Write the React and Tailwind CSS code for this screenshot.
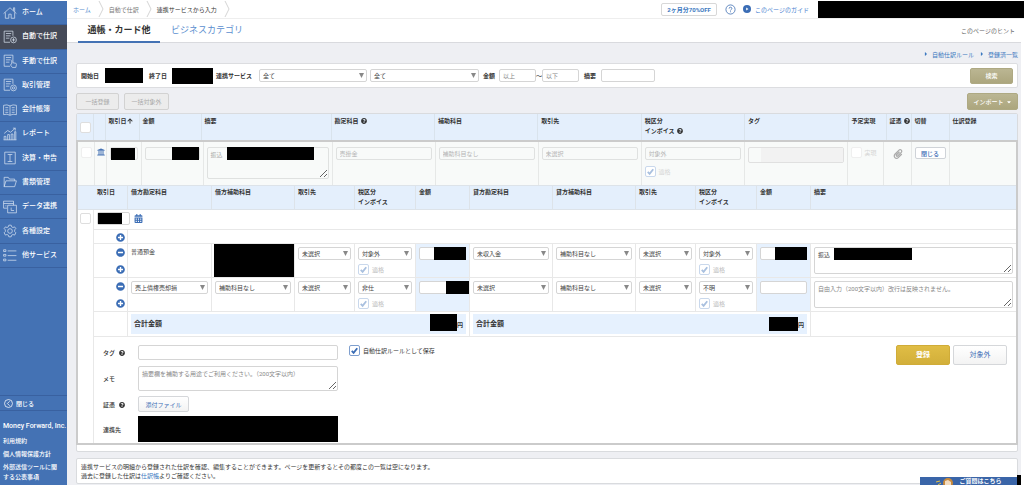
import React from 'react';
import clsx from 'clsx';
import {
    FaArrowUp,
    FaCalendarAlt,
    FaCaretDown,
    FaCaretRight,
    FaMinusCircle,
    FaPaperclip,
    FaPlusCircle,
    FaQuestionCircle,
    FaUniversity,
} from 'react-icons/fa';

const DOC = 'M17 10V2H2v19h10M5 6h9M5 10h8M5 14h6';

const NAV = [
    { label: 'ホーム', d: 'M1 13 12 3l11 10M18 8V3h2v7M4 11v10h6v-7h4v7h6V11' },
    { label: '自動で仕訳', d: `${DOC}M23 17a5 5 0 1 1-10 0 5 5 0 0 1 10 0M18 14v6M15 17h6`, active: true },
    { label: '手動で仕訳', d: `${DOC}M15 17v-6q1-2 2 0v4l5 1q1 0 1 2l-1 5h-6l-3-4 1-2z` },
    { label: '取引管理', d: `${DOC}M23 17a5 5 0 1 1-10 0 5 5 0 0 1 10 0M20 17a2 2 0 1 1-4 0 2 2 0 0 1 4 0` },
    { label: '会計帳簿', d: 'M12 5Q7 2 1 4v16q6-2 11 1 5-3 11-1V4q-6-2-11 1M12 5v16M4 8h5M4 12h5M4 16h5M15 8h5M15 12h5M15 16h5' },
    { label: 'レポート', d: 'M2 22v-6h3v6M8 22v-9h3v9M14 22V12h3v10M20 22V8h2v14M1 22h22M2 11l6-5 5 3 8-7M17 2h4v4' },
    { label: '決算・申告', d: 'M3 2h18v20H3zM8 6h8M12 6v12M8 18h8' },
    { label: '書類管理', d: 'M2 20V4h7l2 3h9v3M2 20l3-10h18l-3 10z' },
    { label: 'データ連携', d: 'M18 9V2H1v12h6M1 6h17M8 9h15v13H8zM14 13v5h5M4 10h2' },
    {
        label: '各種設定',
        d: 'M10 2h4l1 3 2 1 3-1 2 3-2 2v3l2 2-2 4-3-1-2 1-1 3h-4l-1-3-2-1-3 1-2-4 2-2v-3l-2-2 2-3 3 1 2-1zM16 12a4 4 0 1 1-8 0 4 4 0 0 1 8 0',
    },
    { label: '他サービス', d: 'M1 3h4v3H1zM1 11h4v3H1zM1 19h4v3H1zM8 5h15M8 13h15M8 21h15' },
];

const field = 'block w-full border border-[#d5d5d5] rounded-[2px] bg-white px-[3px] text-[#444] placeholder:text-[#888] outline-none';

const Help = () => <FaQuestionCircle className="inline-block align-[-1px] ml-[2px]" size={6} />;

const Masked = ({ className }) => <span className={clsx('block bg-black shrink-0', className)} />;

const Select = ({ label, value, className }) => (
    <div className={clsx('relative', className)}>
        <select aria-label={label} defaultValue={value} className={clsx(field, 'h-[13px] appearance-none leading-[11px]')}>
            <option>{value}</option>
        </select>
        <svg viewBox="0 0 5 5" className="absolute right-[3px] top-1 size-[5px] text-[#888] pointer-events-none">
            <path d="M0 0h5L2.500 5z" fill="currentColor" />
        </svg>
    </div>
);

const Tick = ({ label, text, checked, tone = 'text-[#3b6db5] border-[#7f9fce]', textTone = 'text-[#333]', className }) => (
    <label className={clsx('flex items-center gap-[3px]', className)}>
        <span className="relative block size-[11px] shrink-0">
            <input
                type="checkbox"
                aria-label={label}
                defaultChecked={checked}
                className={clsx('block size-[11px] appearance-none rounded-[2px] border bg-white', tone)}
            />
            {checked && (
                <svg viewBox="0 0 12 12" className={clsx('absolute inset-0 size-[11px] pointer-events-none', tone)}>
                    <path d="M3 6.500 5 8.500 9 3.500" fill="none" stroke="currentColor" strokeWidth="2" />
                </svg>
            )}
        </span>
        {text && <span className={textTone}>{text}</span>}
    </label>
);

const plain = 'border-[#dedede]';
const faded = 'text-[#a9c0df] border-[#c9d8ec]';

const Sidebar = () => (
    <aside className="flex w-[67px] shrink-0 flex-col bg-[#4472b4] text-white font-medium mt-px">
        <nav className="flex h-[267px] flex-col text-[7px]">
            {NAV.map(item => (
                <a
                    key={item.label}
                    href="#"
                    className={clsx(
                        'flex flex-1 items-center gap-[5px] border-b border-[#3961a0] pl-[3px] whitespace-nowrap',
                        item.active && 'bg-[#454a58]'
                    )}
                >
                    <svg viewBox="0 0 24 24" className="size-[14px] shrink-0" fill="none" stroke="#dce6f4" strokeWidth="1.2">
                        <path d={item.d} />
                    </svg>
                    {item.label}
                </a>
            ))}
        </nav>
        <div className="mt-auto">
            <button className="flex h-4 w-full items-center gap-[3px] border-y border-[#3961a0] pl-1 text-[6px]">
                <svg viewBox="0 0 12 12" className="size-[9px]" fill="none" stroke="white">
                    <circle cx="6" cy="6" r="5.3" />
                    <path d="M7.500 3 4.500 6l3 3" />
                </svg>
                閉じる
            </button>
            <div className="flex flex-col gap-[3px] pl-[3px] pt-[10px] pb-[3px] leading-[10px]">
                <a href="#" className="mb-[2px] text-[7px] whitespace-nowrap">Money Forward, Inc.</a>
                <a href="#">利用規約</a>
                <a href="#">個人情報保護方針</a>
                <a href="#">外部送信ツールに関<br />する公表事項</a>
            </div>
        </div>
    </aside>
);

const Separator = () => (
    <svg viewBox="0 0 6 18" className="ml-[7px] mr-[5px] h-[18px] w-[6px]" fill="none" stroke="#d5d5d5">
        <path d="M1 1l4 8-4 8" />
    </svg>
);

const Header = () => (
    <header>
        <div className="flex h-[19px] items-center justify-between border-b border-[#eee] pl-[6px]">
            <div className="flex items-center">
                <a href="#" className="text-[#5b8fcf]">ホーム</a>
                <Separator />
                <span className="text-[#777]">自動で仕訳</span>
                <Separator />
                <span>連携サービスから入力</span>
                <Separator />
            </div>
            <div className="flex items-center">
                <button className="h-[13px] w-14 rounded-[2px] border border-[#d8d8d8] font-bold text-[#3b78c0]">2ヶ月分70%OFF</button>
                <svg viewBox="0 0 12 12" className="ml-2 size-[11px]" fill="none" stroke="#4472b4" strokeWidth="0.9">
                    <circle cx="6" cy="6" r="5" />
                    <path d="M4.500 5q0-1.500 1.500-1.500T7.500 5q0 .7-.8 1.100T6 7M6 8v1" />
                </svg>
                <a href="#" className="ml-[7px] mr-[9px] flex items-center gap-1 text-[#4a7fd0]">
                    <svg viewBox="0 0 8 8" className="size-2">
                        <circle cx="4" cy="4" r="4" fill="#3b6db5" />
                        <path d="M3.200 2.500v3L5.500 4z" fill="white" />
                    </svg>
                    このページのガイド
                </a>
                <Masked className="h-[17px] w-[206px]" />
            </div>
        </div>
        <div className="mr-[3px] flex h-6 items-stretch border-b border-[#d9dade] pl-[11px] pr-[6px] text-[9px]">
            <a href="#" className="-mb-px flex w-[82px] items-center justify-center border-b-2 border-[#4472b4] font-bold">通帳・カード他</a>
            <a href="#" className="ml-[11px] flex items-center text-[#5b8fcf]">ビジネスカテゴリ</a>
            <a href="#" className="ml-auto flex items-center text-[6px] text-[#666]">このページのヒント</a>
        </div>
    </header>
);

const beige = 'bg-linear-to-b from-[#bbb693] to-[#aca67e] text-white border border-[#aea983] rounded-[2px] font-medium';

const SearchBar = () => (
    <form className="flex h-[25px] items-center rounded-[2px] border border-[#dcdde0] bg-white px-1">
        <span className="w-6 font-bold">開始日</span>
        <Masked className="h-[15px] w-[38px]" />
        <span className="ml-[6px] w-[23px] font-bold">終了日</span>
        <Masked className="h-4 w-[41px]" />
        <span className="ml-[3px] w-[43px] font-bold">連携サービス</span>
        <Select label="連携サービス" value="全て" className="w-[108px]" />
        <Select label="口座" value="全て" className="ml-[3px] w-[109px]" />
        <label htmlFor="min" className="ml-1 w-4 font-bold">金額</label>
        <input id="min" placeholder="以上" className={clsx(field, 'h-[13px] max-w-[37px]')} />
        <span>～</span>
        <input aria-label="金額上限" placeholder="以下" className={clsx(field, 'h-[13px] max-w-[37px]')} />
        <label htmlFor="note" className="ml-[5px] w-[17px] shrink-0 font-bold">摘要</label>
        <input id="note" className={clsx(field, 'h-[13px] max-w-[54px]')} />
        <button type="button" className={clsx(beige, 'ml-auto h-4 w-[43px] shrink-0')}>検索</button>
    </form>
);

const COLUMNS = [
    { w: 'w-4' },
    { w: 'w-3' },
    { w: 'w-[34px]', text: '取引日', arrow: true },
    { w: 'w-[62px]', text: '金額' },
    { w: 'w-[130px]', text: '摘要' },
    { text: '勘定科目', help: true },
    { text: '補助科目' },
    { text: '取引先' },
    { text: '税区分', second: 'インボイス', help: true },
    { text: 'タグ' },
    { w: 'w-[38px]', text: '予定実現' },
    { w: 'w-[25px]', text: '証憑', help: true },
    { w: 'w-[38px]', text: '切替' },
    { w: 'w-[68px]', text: '仕訳登録' },
];

const ListHead = () => (
    <table className="w-full table-fixed bg-[#e4effc]">
        <thead>
            <tr className="h-[26px] text-left align-top leading-[10px]">
                {COLUMNS.map((col, i) => (
                    <th key={i} className={clsx(col.w, 'border-r border-[#d9e3ec] last:border-r-0 pt-[2px] pl-[3px] font-bold whitespace-nowrap')}>
                        {i === 0 && <Tick label="すべて選択" tone={plain} className="pt-[6px]" />}
                        {col.text}
                        {col.arrow && <FaArrowUp className="inline-block align-[-1px]" size={6} />}
                        {col.second && <br />}
                        {col.second}
                        {col.help && <Help />}
                    </th>
                ))}
            </tr>
        </thead>
    </table>
);

const off = 'block w-full rounded-[2px] border border-[#dfe1e0] bg-[#f8faf9] px-[3px] text-[#aaa] placeholder:text-[#b5b5b5]';
const cell = 'border-r border-[#e6e8e7] last:border-r-0 px-[3px] pt-[5px]';

const StatementRow = () => (
    <table className="w-full table-fixed bg-[#f8faf9]">
        <tbody>
            <tr className="h-[43px] align-top">
                <td className={clsx(cell, 'w-4')}><Tick label="選択" tone="border-[#efefef]" /></td>
                <td className="w-3 border-r border-[#e6e8e7] pl-[2px] pt-[6px]"><FaUniversity className="text-[#4472b4]" size={8} /></td>
                <td className={clsx(cell, 'w-[35px]')}>
                    <div className="flex h-[13px] items-center rounded-[2px] border border-[#e2e2e2]"><Masked className="h-3 w-6" /></div>
                </td>
                <td className={clsx(cell, 'w-[62px]')}>
                    <div className="flex h-[13px] items-center justify-end rounded-[2px] border border-[#dfe1e0]"><Masked className="h-[13px] w-[27px]" /></div>
                </td>
                <td className={clsx(cell, 'relative w-[129px]')}>
                    <textarea disabled aria-label="摘要" defaultValue="振込" className={clsx(off, 'h-8 resize py-[2px]')} />
                    <Masked className="absolute left-[23px] top-[5px] h-[13px] w-[87px]" />
                </td>
                {['売掛金', '補助科目なし', '未選択', '対象外'].map(v => (
                    <td key={v} className={cell}>
                        <input disabled aria-label={v} placeholder={v} className={clsx(off, 'h-[13px]')} />
                        {v === '対象外' && <Tick checked text="適格" tone={faded} textTone="text-[#d5d5d5]" className="mt-[6px]" />}
                    </td>
                ))}
                <td className={cell}>
                    <div className="h-4 rounded-[2px] border border-[#e0e0e0] pl-3"><div className="h-full bg-[#f2f2f2]" /></div>
                </td>
                <td className={clsx(cell, 'w-9')}><Tick text="実現" tone="border-[#efefef]" textTone="text-[#d5d5d5]" /></td>
                <td className={clsx(cell, 'w-7 pl-[9px]')}><FaPaperclip className="mt-[2px] text-[#aaa]" size={10} /></td>
                <td className={clsx(cell, 'w-[38px]')}>
                    <button className="block h-3 w-full rounded-[2px] border border-[#cfd3d8] bg-white font-medium text-[#3b6db5]">閉じる</button>
                </td>
                <td className={clsx(cell, 'w-[67px]')} />
            </tr>
        </tbody>
    </table>
);

const SUB_COLUMNS = [
    ['w-[84px]', '借方勘定科目'],
    ['w-[83px]', '借方補助科目'],
    ['w-[60px]', '取引先'],
    ['w-[61px]', '税区分', 'インボイス'],
    ['w-[54px]', '金額'],
    ['w-[83px]', '貸方勘定科目'],
    ['w-[83px]', '貸方補助科目'],
    ['w-[60px]', '取引先'],
    ['w-[61px]', '税区分', 'インボイス'],
    ['w-[54px]', '金額'],
    ['', '摘要'],
];

const line = 'border-r border-b border-[#e8e8e8] last:border-r-0 px-[3px] pt-[3px]';

const TaxCell = ({ value }) => (
    <td className={line}>
        <Select label="税区分" value={value} />
        <Tick checked text="適格" tone={faded} textTone="text-[#bbb]" className="mt-[4px]" />
    </td>
);

const AmountCell = ({ mask }) => (
    <td className={clsx(line, 'relative bg-[#e6f1fe]')}>
        <input aria-label="金額" className={clsx(field, 'h-[13px]')} />
        {mask && <Masked className={clsx('absolute top-[3px] h-[13px]', mask)} />}
    </td>
);

const LineButtons = () => (
    <td className={clsx(line, 'pr-[2px]')}>
        <div className="flex flex-col items-end gap-2 pt-px text-[#3b6db5]">
            <button aria-label="行を削除"><FaMinusCircle size={9} /></button>
            <button aria-label="行を追加"><FaPlusCircle size={9} /></button>
        </div>
    </td>
);

const secondary = 'rounded-[2px] border border-[#d5d7da] bg-linear-to-b from-white to-[#f3f3f3] text-[#3b6db5]';

const EntryForm = () => (
    <div className="flex items-start pt-2 pl-[9px] pr-[9px]">
        <div className="grid grid-cols-[35px_200px] items-center">
            <label htmlFor="tag" className="font-medium">タグ <Help /></label>
            <input id="tag" className={clsx(field, 'h-[15px]')} />
            <label htmlFor="memo" className="mt-[6px] font-medium">メモ</label>
            <textarea id="memo" placeholder="摘要欄を補助する用途でご利用ください。（200文字以内）" className={clsx(field, 'mt-[6px] h-[25px] resize py-[2px]')} />
            <span className="mt-[5px] font-medium">証憑 <Help /></span>
            <button className={clsx(secondary, 'mt-[5px] h-4 w-[51px]')}>添付ファイル</button>
            <span className="mt-1 font-medium">連携先</span>
            <Masked className="mt-1 h-[26px] w-full" />
        </div>
        <Tick checked text="自動仕訳ルールとして保存" className="ml-[11px]" />
        <div className="ml-auto flex gap-[3px] text-[7px]">
            <button className="h-5 w-[54px] rounded-[2px] border border-[#d0ac38] bg-linear-to-b from-[#e0bd45] to-[#d2af3a] font-bold text-white">登録</button>
            <button className={clsx(secondary, 'h-5 w-[54px]')}>対象外</button>
        </div>
    </div>
);

const JournalTable = () => (
    <table className="w-full table-fixed border-separate border-spacing-0 bg-white">
        <thead>
            <tr className="h-[25px] bg-[#e4effc] text-left align-top leading-[10px]">
                <th className="w-4 border-y border-[#dde3e9]" />
                <th className="w-[34px] border-y border-r border-[#dde3e9] pt-px pl-[3px] font-bold">取引日</th>
                {SUB_COLUMNS.map(([w, text, second], i) => (
                    <th key={i} className={clsx(w, 'border-y border-r border-[#dde3e9] last:border-r-0 pt-px pl-[3px] font-bold')}>
                        {text}
                        {second && <br />}
                        {second}
                    </th>
                ))}
            </tr>
        </thead>
        <tbody className="align-top">
            <tr className="h-5">
                <td rowSpan={6} className="border-r border-[#e8e8e8] pt-[3px] pl-[2px]"><Tick label="選択" tone={plain} /></td>
                <td colSpan={12} className="border-b border-[#e8e8e8] px-[3px] pt-[2px]">
                    <div className="flex items-center gap-1">
                        <div className="h-[13px] w-[33px] rounded-[2px] border border-[#d5d5d5]"><Masked className="h-[11px] w-6" /></div>
                        <FaCalendarAlt className="text-[#3b6db5]" size={9} />
                    </div>
                </td>
            </tr>
            <tr className="h-[14px]">
                <td className={clsx(line, 'pr-[2px]')}>
                    <button aria-label="行を追加" className="ml-auto block text-[#3b6db5]"><FaPlusCircle size={9} /></button>
                </td>
                <td colSpan={11} className="border-b border-[#e8e8e8]" />
            </tr>
            <tr className="h-[34px]">
                <LineButtons />
                <td className={clsx(line, 'text-[#444]')}>普通預金</td>
                <td className="border-r border-b border-[#e8e8e8] pl-[2px]"><Masked className="h-[33px] w-20" /></td>
                <td className={line}><Select label="取引先" value="未選択" /></td>
                <TaxCell value="対象外" />
                <AmountCell mask="right-[3px] w-8" />
                <td className={line}><Select label="貸方勘定科目" value="未収入金" /></td>
                <td className={line}><Select label="貸方補助科目" value="補助科目なし" /></td>
                <td className={line}><Select label="取引先" value="未選択" /></td>
                <TaxCell value="対象外" />
                <AmountCell mask="right-[3px] w-8" />
                <td className={clsx(line, 'relative')}>
                    <textarea aria-label="摘要" defaultValue="振込" className={clsx(field, 'h-[27px] resize py-[2px]')} />
                    <Masked className="absolute left-[23px] top-[4px] h-3 w-[78px]" />
                </td>
            </tr>
            <tr className="h-[34px]">
                <LineButtons />
                <td className={line}><Select label="借方勘定科目" value="売上債権売却損" /></td>
                <td className={line}><Select label="借方補助科目" value="補助科目なし" /></td>
                <td className={line}><Select label="取引先" value="未選択" /></td>
                <TaxCell value="非仕" />
                <AmountCell mask="right-0 w-[23px]" />
                <td className={line}><Select label="貸方勘定科目" value="未選択" /></td>
                <td className={line}><Select label="貸方補助科目" value="補助科目なし" /></td>
                <td className={line}><Select label="取引先" value="未選択" /></td>
                <TaxCell value="不明" />
                <AmountCell />
                <td className={line}>
                    <textarea aria-label="摘要" placeholder="自由入力（200文字以内）改行は反映されません。" className={clsx(field, 'h-[27px] resize py-[2px]')} />
                </td>
            </tr>
            <tr className="h-[25px]">
                <td className={line} />
                {['h-[17px] w-[27px] mb-[3px]', 'h-[14px] w-[29px]'].map(mask => (
                    <td key={mask} colSpan={5} className="border-r border-b border-[#e8e8e8] px-[3px] pt-[2px]">
                        <div className="flex h-5 items-center bg-[#e6f1fe] px-[3px] text-[7px] font-bold">
                            合計金額
                            <Masked className={clsx('ml-auto', mask)} />
                            <span className="text-[6px]">円</span>
                        </div>
                    </td>
                ))}
                <td className={line} />
            </tr>
            <tr className="h-[106px]">
                <td colSpan={12}><EntryForm /></td>
            </tr>
        </tbody>
    </table>
);

const App = () => (
    <div
        className="flex h-screen overflow-hidden bg-white text-[6px] leading-[9px] text-[#333]"
        style={{ fontFamily: 'Roboto, "Noto Sans CJK JP", sans-serif' }}
    >
        <Sidebar />
        <div className="flex min-w-0 flex-1 flex-col">
            <Header />
            <main className="mr-[3px] flex-1 bg-[#eeeff3] pl-[9px] pr-[3px]">
                <div className="flex h-5 items-center justify-end gap-[5px] pt-[2px] text-[#3b78c0]">
                    <a href="#" className="flex items-center gap-[3px]"><FaCaretRight size={6} />自動仕訳ルール</a>
                    <a href="#" className="flex items-center gap-[3px]"><FaCaretRight size={6} />登録済一覧</a>
                </div>
                <SearchBar />
                <div className="mt-[5px] mb-[3px] flex h-[17px] gap-[5px]">
                    <button disabled className="w-[43px] rounded-[2px] border border-[#d2d2d2] bg-[#ececec] text-[#aaa]">一括登録</button>
                    <button disabled className="w-[45px] rounded-[2px] border border-[#d2d2d2] bg-[#ececec] text-[#aaa]">一括対象外</button>
                    <button className={clsx(beige, 'ml-auto flex w-[51px] items-center justify-center gap-[2px]')}>
                        インポート<FaCaretDown size={6} />
                    </button>
                </div>
                <section className="rounded-[2px] border border-[#d9dbde] bg-white pb-[6px]">
                    <ListHead />
                    <div className="-mx-px border-2 border-[#cbcbcb]">
                        <StatementRow />
                        <JournalTable />
                    </div>
                </section>
                <section className="mt-[6px] rounded-[2px] border border-[#d9dbde] bg-white px-1 py-[3px]">
                    <p>連携サービスの明細から登録された仕訳を確認、編集することができます。ページを更新するとその都度この一覧は空になります。</p>
                    <p>過去に登録した仕訳は<a href="#" className="text-[#3b78c0]">仕訳帳</a>よりご確認ください。</p>
                </section>
            </main>
        </div>
        <button className="fixed right-[7px] bottom-0 flex h-2 w-[97px] items-center justify-center gap-[6px] bg-[#3a65a8] font-bold leading-[8px] text-white">
            <svg viewBox="0 0 18 8" className="h-2 w-[18px]">
                <path d="M1 5l4-1M3 8l3-2" stroke="#e8c145" />
                <circle cx="13" cy="6" r="5" fill="#c98a3c" />
                <path d="M10 8V4l3-1 3 2v3" fill="#f3dcc0" />
            </svg>
            ご質問はこちら
        </button>
        <div className="fixed right-[3px] bottom-0 h-[10px] w-1 bg-black" />
    </div>
);

export default App;
